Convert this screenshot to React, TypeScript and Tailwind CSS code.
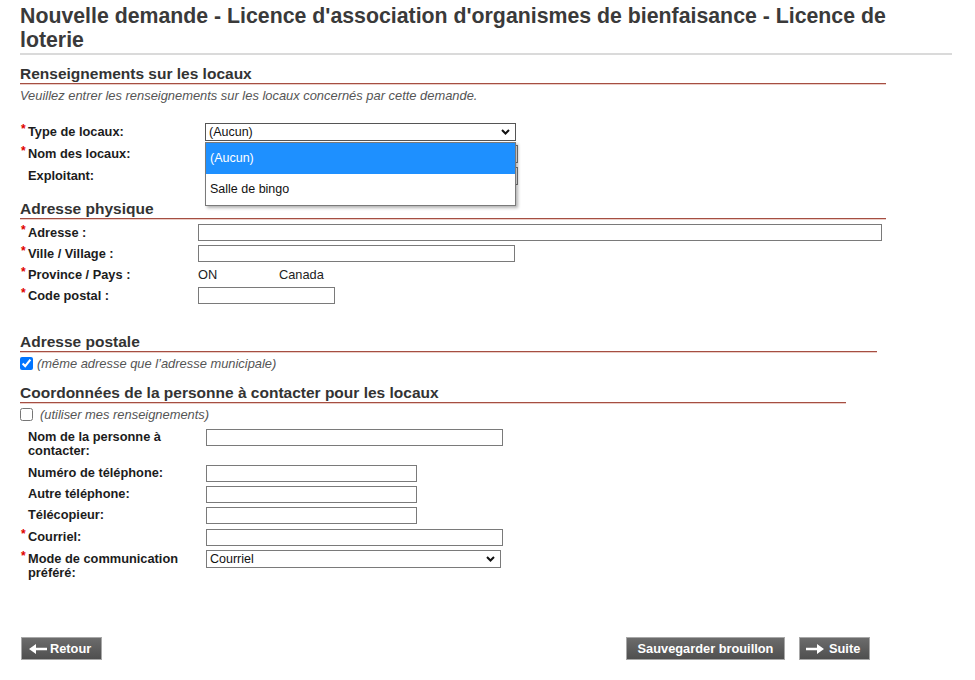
import React from "react";

const Heading = ({ text, cls }: { text: string; cls: string }) => (
  <div className={cls}>
    <div className="text-[15.5px] leading-[18px] font-bold text-[#333333]">{text}</div>
    <div className="h-[1px] bg-[#a54e42]" />
    <div className="h-[1px] bg-[#ebcdc7]" />
  </div>
);

const Label = ({ text, req, cls }: { text: React.ReactNode; req?: boolean; cls: string }) => (
  <div className={`flex shrink-0 items-start ${cls}`}>
    <span className="w-[8px] shrink-0 pl-[1px] font-bold text-[#e00000] text-[12px] leading-[9px]">{req ? "*" : ""}</span>
    <span className="font-bold text-[12.8px] leading-[14px] text-[#1c1c1c]">{text}</span>
  </div>
);

const Chevron = () => (
  <svg width="9" height="6" viewBox="0 0 9 6" className="shrink-0">
    <polyline points="1,1 4.5,4.5 8,1" fill="none" stroke="#111" strokeWidth="2" />
  </svg>
);

const ArrowLeft = () => (
  <svg width="18" height="10" viewBox="0 0 18 10" className="shrink-0">
    <path d="M0 5 L7 0 L7 3.8 L18 3.8 L18 6.2 L7 6.2 L7 10 Z" fill="white" />
  </svg>
);

const ArrowRight = () => (
  <svg width="18" height="10" viewBox="0 0 18 10" className="shrink-0">
    <path d="M18 5 L11 0 L11 3.8 L0 3.8 L0 6.2 L11 6.2 L11 10 Z" fill="white" />
  </svg>
);

export default function App() {
  return (
    <div className="relative w-[975px] h-[680px] overflow-hidden bg-white font-['Liberation_Sans',Arial,sans-serif]">
      <div className="pl-[20px]">
        <h1 className="pt-[4px] text-[21.3px] leading-[24px] font-bold text-[#3a3a3a]">
          Nouvelle demande - Licence d'association d'organismes de bienfaisance - Licence de
          <br />
          loterie
        </h1>
        <div className="mt-[1px] h-[2px] w-[932px] bg-[#dadada]" />

        <Heading text="Renseignements sur les locaux" cls="mt-[10px] w-[866px]" />
        <div className="mt-[3px] text-[12.9px] leading-[16px] italic text-[#555555]">
          Veuillez entrer les renseignements sur les locaux concernés par cette demande.
        </div>

        <div className="mt-[19px] flex flex-col gap-[4px]">
          <div className="flex h-[18px] items-center">
            <Label text="Type de locaux:" req cls="w-[185px]" />
            <div className="relative">
              <div className="flex h-[18px] w-[311px] items-center justify-between border border-[#555555] pl-[3px] pr-[5px] text-[12.5px] text-[#111]">
                <span>(Aucun)</span>
                <Chevron />
              </div>
              <div className="absolute left-0 top-[19px] z-10 w-[311px] border border-[#7a7a7a] bg-white shadow-[2px_2px_3px_rgba(0,0,0,0.3)]">
                <div className="flex h-[31px] items-center bg-[#1e90ff] pl-[4px] text-[12.5px] text-white">(Aucun)</div>
                <div className="flex h-[31px] items-center pl-[4px] text-[12.5px] text-[#111]">Salle de bingo</div>
              </div>
            </div>
          </div>
          <div className="flex h-[18px] items-center">
            <Label text="Nom des locaux:" req cls="w-[185px]" />
            <div className="h-[18px] w-[313px] border border-[#7a7a7a]" />
          </div>
          <div className="flex h-[18px] items-center">
            <Label text="Exploitant:" cls="w-[185px]" />
            <div className="h-[18px] w-[313px] border border-[#7a7a7a]" />
          </div>
        </div>

        <Heading text="Adresse physique" cls="mt-[15px] w-[866px]" />
        <div className="mt-[4px] flex flex-col gap-[4px]">
          <div className="flex h-[17px] items-center">
            <Label text="Adresse :" req cls="w-[178px]" />
            <div className="h-[17px] w-[684px] border border-[#7a7a7a]" />
          </div>
          <div className="flex h-[17px] items-center">
            <Label text="Ville / Village :" req cls="w-[178px]" />
            <div className="h-[17px] w-[317px] border border-[#7a7a7a]" />
          </div>
          <div className="flex h-[17px] items-center">
            <Label text="Province / Pays :" req cls="w-[178px]" />
            <span className="w-[81px] text-[12.8px] leading-[14px] text-[#222]">ON</span>
            <span className="text-[12.8px] leading-[14px] text-[#222]">Canada</span>
          </div>
          <div className="flex h-[17px] items-center">
            <Label text="Code postal :" req cls="w-[178px]" />
            <div className="h-[17px] w-[137px] border border-[#7a7a7a]" />
          </div>
        </div>

        <Heading text="Adresse postale" cls="mt-[29px] w-[857px]" />
        <div className="mt-[4px] flex h-[13px] items-center gap-[4px]">
          <input type="checkbox" defaultChecked className="h-[13px] w-[13px]" />
          <span className="text-[12.9px] leading-[14px] italic text-[#555555]">(même adresse que l’adresse municipale)</span>
        </div>

        <Heading text="Coordonnées de la personne à contacter pour les locaux" cls="mt-[14px] w-[826px]" />
        <div className="mt-[4px] flex h-[13px] items-center gap-[7px]">
          <input type="checkbox" className="h-[13px] w-[13px]" />
          <span className="text-[12.9px] leading-[14px] italic text-[#555555]">(utiliser mes renseignements)</span>
        </div>

        <div className="mt-[8px] flex flex-col">
          <div className="flex h-[36px] items-start">
            <div className="w-[186px] shrink-0 pt-[1px]">
              <Label text="Nom de la personne à contacter:" cls="w-[160px]" />
            </div>
            <div className="h-[17px] w-[297px] border border-[#7a7a7a]" />
          </div>
          <div className="flex h-[21px] items-start">
            <div className="w-[186px] shrink-0 pt-[1px]">
              <Label text="Numéro de téléphone:" cls="w-[160px]" />
            </div>
            <div className="h-[17px] w-[211px] border border-[#7a7a7a]" />
          </div>
          <div className="flex h-[21px] items-start">
            <div className="w-[186px] shrink-0 pt-[1px]">
              <Label text="Autre téléphone:" cls="w-[160px]" />
            </div>
            <div className="h-[17px] w-[211px] border border-[#7a7a7a]" />
          </div>
          <div className="flex h-[22px] items-start">
            <div className="w-[186px] shrink-0 pt-[1px]">
              <Label text="Télécopieur:" cls="w-[160px]" />
            </div>
            <div className="h-[17px] w-[211px] border border-[#7a7a7a]" />
          </div>
          <div className="flex h-[21px] items-start">
            <div className="w-[186px] shrink-0 pt-[1px]">
              <Label text="Courriel:" req cls="w-[160px]" />
            </div>
            <div className="h-[17px] w-[297px] border border-[#7a7a7a]" />
          </div>
          <div className="flex h-[30px] items-start">
            <div className="w-[186px] shrink-0 pt-[2px]">
              <Label text="Mode de communication préféré:" req cls="w-[160px]" />
            </div>
            <div className="flex h-[18px] w-[295px] items-center justify-between border border-[#7a7a7a] pl-[3px] pr-[5px] text-[12.5px] text-[#111]">
              <span>Courriel</span>
              <Chevron />
            </div>
          </div>
        </div>

        <div className="ml-[1px] mt-[57px] flex w-[849px] justify-between">
          <button className="flex h-[23px] w-[81px] items-center gap-[3px] border border-[#a8a8a8] bg-gradient-to-b from-[#6c6c6c] to-[#4f4f4f] pl-[7px] text-[12.8px] font-bold text-white">
            <ArrowLeft />
            <span>Retour</span>
          </button>
          <div className="flex gap-[14px]">
            <button className="flex h-[23px] w-[159px] items-center justify-center border border-[#a8a8a8] bg-gradient-to-b from-[#6c6c6c] to-[#4f4f4f] text-[12.8px] font-bold text-white">
              Sauvegarder brouillon
            </button>
            <button className="flex h-[23px] w-[71px] items-center gap-[5px] border border-[#a8a8a8] bg-gradient-to-b from-[#6c6c6c] to-[#4f4f4f] pl-[6px] text-[12.8px] font-bold text-white">
              <ArrowRight />
              <span>Suite</span>
            </button>
          </div>
        </div>
      </div>
    </div>
  );
}
